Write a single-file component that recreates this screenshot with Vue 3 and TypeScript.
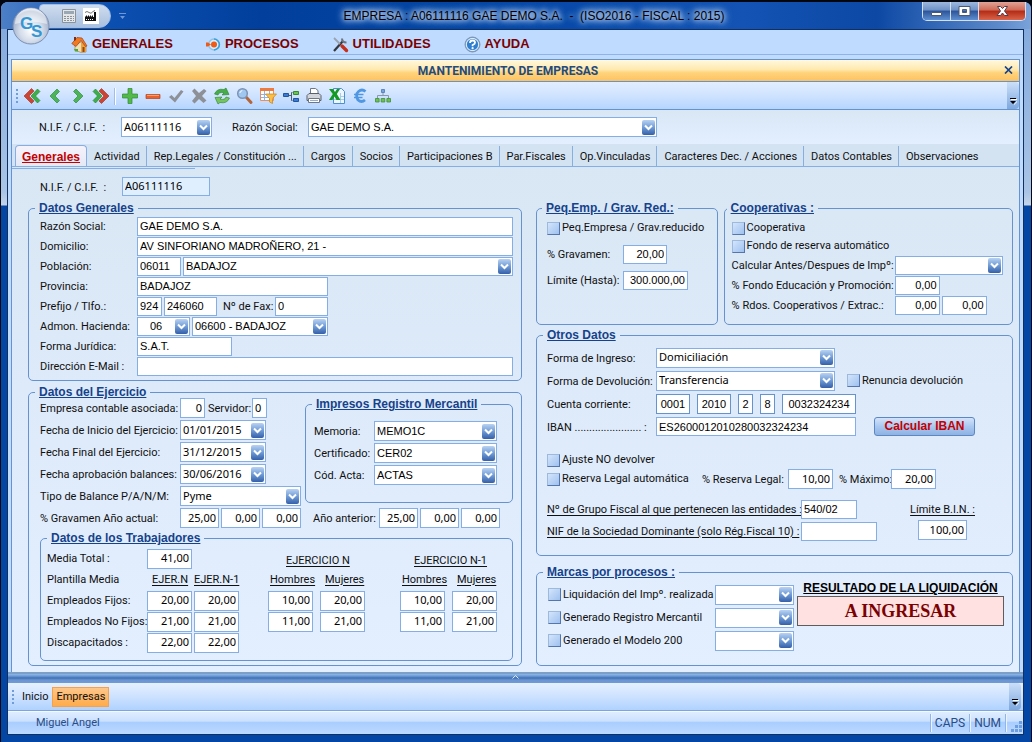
<script setup lang="ts">
import { ref } from 'vue'

interface Worker {
  id: string
  label: string
  values: string[]
}

const tabs: string[] = [
  'Generales', 'Actividad', 'Rep.Legales / Constitución ...', 'Cargos', 'Socios', 'Participaciones B',
  'Par.Fiscales', 'Op.Vinculadas', 'Caracteres Dec. / Acciones', 'Datos Contables', 'Observaciones',
]
const activeTab = ref('Generales')

const workers: Worker[] = [
  { id: 'fijos', label: 'Empleados Fijos:', values: ['20,00', '20,00', '10,00', '20,00', '10,00', '20,00'] },
  { id: 'nofijos', label: 'Empleados No Fijos:', values: ['21,00', '21,00', '11,00', '21,00', '11,00', '21,00'] },
  { id: 'disc', label: 'Discapacitados :', values: ['22,00', '22,00'] },
]

const account = [
  { size: 'w34', value: '0001', name: 'Entidad' },
  { size: 'w34', value: '2010', name: 'Oficina' },
  { size: 'w15', value: '2', name: 'Dígito 1' },
  { size: 'w15', value: '8', name: 'Dígito 2' },
  { size: 'w74', value: '0032324234', name: 'Número' },
]

const marks = ['Liquidación del Impº. realizada', 'Generado Registro Mercantil', 'Generado el Modelo 200']
</script>

<template>
  <div class="window">
    <header class="titlebar">
      <div class="quick">
        <button class="plain" aria-label="Calculadora">
          <svg width="16" height="16" viewBox="0 0 16 16"><path fill="#e4e6e8" stroke="#8a929c" d="M1.500 1.500h13v13h-13z" /><path fill="#9aa7b4" d="M3 3h10v3H3z" /><path stroke="#8b929b" stroke-width="1" stroke-dasharray="2 1" d="M3 8.500h10M3 10.500h10M3 12.500h10" /></svg>
        </button>
        <button class="plain" aria-label="Empresas">
          <svg width="16" height="16" viewBox="0 0 16 16"><path fill="#fff" d="M0 0h16v16H0z" /><path fill="#111" d="M2 13V9l2-2v2l2-2v2l2-2v2l2-2v2h1V4h2v9z" /><path fill="none" stroke="#777" d="M2 4.500q2-2 4 0t4-1l2-1" /><path stroke="#fff" d="M3 11.500h8" stroke-dasharray="1 1" /></svg>
        </button>
      </div>
      <svg class="more" width="7" height="8" viewBox="0 0 7 8"><path fill="#6f97d3" d="M0 1h7v1H0zM1 4h5L3.500 7z" /></svg>
      <h1 class="caption">EMPRESA : A06111116 GAE DEMO S.A.&nbsp; -&nbsp; (ISO2016 - FISCAL : 2015)</h1>
      <div class="winbtns">
        <button class="wb" aria-label="Minimizar"><svg width="13" height="13" viewBox="0 0 13 13"><path fill="#fff" stroke="#4a5a75" d="M1.500 7.500h10v3h-10z" /></svg></button>
        <button class="wb" aria-label="Maximizar"><svg width="13" height="13" viewBox="0 0 13 13"><path fill="#fff" fill-rule="evenodd" stroke="#4a5a75" d="M1 1.500h11v9H1zM4.500 4.500v3h4v-3z" /></svg></button>
        <button class="wb close" aria-label="Cerrar"><svg width="15" height="13" viewBox="0 0 15 13"><path fill="#fff" stroke="#5a3a45" d="M2.500 1.500h3l2 2 2-2h3L9.500 6l3.500 4.500H9.500L7.500 8l-2 2.500H2L5.500 6z" /></svg></button>
      </div>
      <svg class="orb" width="40" height="40" viewBox="0 0 40 40">
        <defs>
          <radialGradient id="orbFill" cx="50%" cy="62%" r="62%"><stop offset="0" stop-color="#ffffff" /><stop offset=".5" stop-color="#d3dcea" /><stop offset=".85" stop-color="#a4b3cc" /><stop offset="1" stop-color="#eef3fa" /></radialGradient>
        </defs>
        <circle cx="20" cy="20" r="18" fill="url(#orbFill)" stroke="#7d90b3" />
        <path fill="#fff" opacity=".5" d="M4 18a16 16 0 0 1 32 0q-16-5-32 0z" />
        <text x="9" y="23" font-family="Liberation Sans, sans-serif" font-weight="700" font-size="17" fill="#3497d3">G<tspan x="20" y="31">S</tspan></text>
      </svg>
    </header>

    <div class="client">
      <nav class="menu">
        <a href="#generales"><svg width="17" height="17" viewBox="0 0 17 17"><path fill="#ece0b8" stroke="#8c7a56" stroke-width=".6" d="M4 9l6-3 5 4v6l-5 .5L4 14z" /><path fill="#f2a03a" d="M10 6l5 4v6l-5 .5z" /><path fill="#f07a22" stroke="#a83d10" stroke-width=".7" d="M.8 7.500L6 1.500l5 .5 5 8-1.500.5-4.500-6-5 6z" /><path fill="#8a4a16" d="M11.500 11h2v5h-2z" /><path fill="#7b2c14" d="M3 1h2v3L3 5z" /><path fill="#58a22f" d="M3 13h4v2.500H4z" /></svg>GENERALES</a>
        <a href="#procesos"><svg width="15" height="15" viewBox="0 0 15 15"><circle cx="8" cy="7.500" r="5.400" fill="#d8ecfb" stroke="#8cc4ea" stroke-width="1.500" /><path fill="none" stroke="#3a9fd8" stroke-width="1.500" d="M8 2.100a5.400 5.400 0 0 1 0 10.800" /><circle cx="8" cy="7.500" r="3" fill="#ee5a17" /><path fill="#ee5a17" d="M0 5.500h2l3 2-3 2H0z" /></svg>PROCESOS</a>
        <a href="#utilidades"><svg width="17" height="17" viewBox="0 0 17 17"><path stroke="#33373d" stroke-width="2.200" d="M2 15L11 5" /><path fill="none" stroke="#6d747d" stroke-width="2" d="M10 2.500q0 4 4.500 4" /><path stroke="#9aa3ad" stroke-width="1.800" d="M2 2l6 6" /><path stroke="#c5301c" stroke-width="3.400" stroke-linecap="round" d="M10 10l4.500 4.500" /></svg>UTILIDADES</a>
        <a href="#ayuda"><svg width="17" height="17" viewBox="0 0 17 17"><circle cx="8.500" cy="8.500" r="7.500" fill="#2f7fd0" stroke="#8897ab" /><circle cx="8.500" cy="8.500" r="6.200" fill="none" stroke="#dce9f7" stroke-width="1.200" /><path fill="none" stroke="#fff" stroke-width="1.800" d="M6 7q0-2.500 2.500-2.500T11 6.700Q11 8 8.600 9v1.200" /><circle cx="8.600" cy="12.200" r="1.100" fill="#fff" /></svg>AYUDA</a>
      </nav>

      <main class="panel">
        <div class="gold">
          <h2>MANTENIMIENTO DE EMPRESAS</h2>
          <button class="plain goldx" aria-label="Cerrar ventana"><svg width="9" height="8" viewBox="0 0 9 8"><path stroke="#15428b" stroke-width="1.700" d="M1 .5l7 7M8 .5l-7 7" /></svg></button>
        </div>

        <div class="toolbar">
          <span class="grip"></span>
          <button class="tb" aria-label="Primero"><svg width="18" height="18" viewBox="0 0 18 18"><path fill="#cc4534" stroke="#9c3024" stroke-width=".6" d="M8.500 1.500L11 4 6 9l5 5-2.500 2.500L1 9z" /><path fill="#3fae49" stroke="#238032" stroke-width=".6" d="M14.500 2L17 4.500 12.500 9l4.500 4.500-2.500 2.500L8 9z" /></svg></button>
          <button class="tb" aria-label="Anterior"><svg width="18" height="18" viewBox="0 0 18 18"><path fill="#4cb356" stroke="#238032" stroke-width=".6" d="M11 2l2.500 2.500L9 9l4.500 4.500L11 16 4 9z" /></svg></button>
          <button class="tb" aria-label="Siguiente"><svg width="18" height="18" viewBox="0 0 18 18"><path fill="#4cb356" stroke="#238032" stroke-width=".6" d="M7 2L4.500 4.500 9 9l-4.500 4.500L7 16l7-7z" /></svg></button>
          <button class="tb" aria-label="Último"><svg width="18" height="18" viewBox="0 0 18 18"><path fill="#cc4534" stroke="#9c3024" stroke-width=".6" d="M9.500 1.500L7 4l5 5-5 5 2.500 2.500L17 9z" /><path fill="#3fae49" stroke="#238032" stroke-width=".6" d="M3.500 2L1 4.500 5.500 9 1 13.500 3.500 16 10 9z" /></svg></button>
          <span class="sep"></span>
          <button class="tb" aria-label="Añadir"><svg width="18" height="18" viewBox="0 0 18 18"><path fill="#55b84c" stroke="#2f8a30" stroke-width=".7" d="M7 1.500h4V7h5.500v4H11v5.500H7V11H1.500V7H7z" /></svg></button>
          <button class="tb" aria-label="Eliminar"><svg width="18" height="18" viewBox="0 0 18 18"><path fill="#e8602c" stroke="#b5401a" stroke-width=".7" d="M2 7.500h14v4H2z" /><path fill="#f6a070" d="M3 8h12v1H3z" /></svg></button>
          <button class="tb" aria-label="Guardar"><svg width="18" height="18" viewBox="0 0 18 18"><path fill="#8d9097" d="M2 10l2.500-2L7.500 11 14 3l2.500 1.500-8.500 11z" /></svg></button>
          <button class="tb" aria-label="Cancelar"><svg width="18" height="18" viewBox="0 0 18 18"><path fill="#8d9097" d="M4.500 1.500L9 6l5-4 2.500 2L12 9l4.500 4.500-3 2.500L9 12l-4.500 4.500L2 14l4-5L2 4z" /></svg></button>
          <button class="tb" aria-label="Refrescar"><svg width="18" height="18" viewBox="0 0 18 18"><path fill="#46ad47" stroke="#2a7f33" stroke-width=".6" d="M1.500 7Q4 1 11 2.500L13 1l3 6.500-7 .5 2-2Q6 4.500 5 8z" /><path fill="#76c45e" stroke="#2a7f33" stroke-width=".6" d="M16.500 11Q14 17 7 15.500L5 17l-3-6.500 7-.5-2 2q5 1.500 6-2z" /></svg></button>
          <button class="tb" aria-label="Buscar"><svg width="18" height="18" viewBox="0 0 18 18"><path stroke="#b5653a" stroke-width="3" stroke-linecap="round" d="M10.500 10.500L15 15.500" /><circle cx="6.500" cy="6.500" r="4.800" fill="#9fc7ef" stroke="#7b93b5" stroke-width="1.500" /><path fill="none" stroke="#fff" d="M3.800 6q.5-2 2.500-2.500" /></svg></button>
          <button class="tb" aria-label="Filtrar"><svg width="18" height="18" viewBox="0 0 18 18"><path fill="#fff" stroke="#e98d62" d="M1.500 1.500h13v12h-13z" /><path fill="#ee7a3e" d="M1 1h14v3H1z" /><path fill="none" stroke="#8fb2e2" d="M2 7.500h12M2 10.500h12M5.500 4v9M10.500 4v9" /><path fill="#f9bf4a" stroke="#c98a25" stroke-width=".8" d="M6.500 7h11L13.500 11.500v5l-3-1.500v-3.500z" /></svg></button>
          <button class="tb" aria-label="Relaciones"><svg width="18" height="18" viewBox="0 0 18 18"><path fill="none" stroke="#4b5e78" d="M6 8.500h4M10.500 5.500H9.500v8h1" /><path fill="#3c7bd0" stroke="#2155a0" d="M1.500 6.500h5v3h-5zM11.500 11.500h5v3h-5z" /><path fill="#69c34f" stroke="#368b2c" d="M11.500 4.500h5v3h-5z" /></svg></button>
          <button class="tb" aria-label="Imprimir"><svg width="18" height="18" viewBox="0 0 18 18"><path fill="#fff" stroke="#6f7782" d="M5.500 7.500V1.500h5l2.500 2v4" /><path fill="#d2d6dc" stroke="#59616c" d="M2 13.500V8.500l2-2h10l2 2v5z" /><path fill="#fff" stroke="#6f7782" d="M3.500 11.500h11v4h-11z" /><path stroke="#91adce" d="M5 13.500h8" /></svg></button>
          <button class="tb" aria-label="Exportar a Excel"><svg width="18" height="18" viewBox="0 0 18 18"><path fill="#eef6ff" stroke="#4b8fcd" d="M5.500 1.500h8l3 3v12h-11z" /><path stroke="#a8cdea" d="M12 9.500h4M6 12.500h10M12.500 6v10" /><path fill="#159a26" d="M1 2h4l2 3 2-3h3L8.800 7l3.700 6H8.500L6.500 9.500 4.500 13H1l3.800-6z" /></svg></button>
          <button class="tb" aria-label="Euro"><svg width="18" height="18" viewBox="0 0 18 18"><path fill="none" stroke="#4f97e3" stroke-width="2.800" d="M14.500 4.500Q11 1.500 7.500 4.500T7 13q3.500 3 7 0" /><path stroke="#4f97e3" stroke-width="1.700" d="M3 7.500h9.500M3 10.500h8.500" /></svg></button>
          <button class="tb" aria-label="Organigrama"><svg width="18" height="18" viewBox="0 0 18 18"><path fill="none" stroke="#8a98aa" d="M9 5v4M3.500 11.500V8.500h11v3" /><path fill="#7aa3dc" stroke="#4b76b5" stroke-width=".8" d="M7.500 2.500h3v3h-3z" /><path fill="#72bd58" stroke="#3b8f34" stroke-width=".8" d="M1.500 11.500h3.600v3.500H1.500zM7.200 11.500h3.600v3.500H7.200zM12.900 11.500h3.600v3.500h-3.600z" /></svg></button>
          <button class="overflow" aria-label="Más botones"><svg width="7" height="7" viewBox="0 0 7 7"><path fill="#000" d="M0 0h6v1H0zM0 3h6L3 6z" /><path fill="#fff" d="M1 1h6v1H1zM4 6l3-3v1L4 7z" /></svg></button>
        </div>

        <div class="search">
          <label class="lb l82" for="q-nif">N.I.F. / C.I.F.&nbsp; :</label>
          <select id="q-nif" class="w91 tah h20"><option>A06111116</option></select>
          <label class="lb l76 gap20" for="q-razon">Razón Social:</label>
          <select id="q-razon" class="w349 h20"><option>GAE DEMO S.A.</option></select>
        </div>

        <div class="tabs" role="tablist">
          <button v-for="t in tabs" :key="t" role="tab" :aria-selected="t === activeTab" :class="['tab', { on: t === activeTab }]" @click="activeTab = t">{{ t }}</button>
        </div>

        <form class="body" @submit.prevent>
          <div class="row nif">
            <label class="lb l82" for="nif">N.I.F. / C.I.F.&nbsp; :</label>
            <input id="nif" class="w88 tah ro" value="A06111116" readonly>
          </div>

          <div class="cols">
            <div class="col">
              <fieldset class="general">
                <legend>Datos Generales</legend>
                <div class="row"><label class="lb l97" for="razon">Razón Social:</label><input id="razon" class="grow" value="GAE DEMO S.A."></div>
                <div class="row"><label class="lb l97" for="dom">Domicilio:</label><input id="dom" class="grow" value="AV SINFORIANO MADROÑERO, 21 -"></div>
                <div class="row"><label class="lb l97" for="pob">Población:</label><input id="pob" class="w44" value="06011"><select class="grow" aria-label="Municipio"><option>BADAJOZ</option></select></div>
                <div class="row"><label class="lb l97" for="prov">Provincia:</label><input id="prov" class="w191" value="BADAJOZ"></div>
                <div class="row"><label class="lb l97" for="pref">Prefijo / Tlfo.:</label><input id="pref" class="w25" value="924"><input class="w53" value="246060" aria-label="Teléfono"><label class="lb l56 pad4" for="fax">Nº de Fax:</label><input id="fax" class="w53" value="0"></div>
                <div class="row"><label class="lb l97" for="admon">Admon. Hacienda:</label><select id="admon" class="w53 ind"><option>06</option></select><select class="w136" aria-label="Delegación"><option>06600 - BADAJOZ</option></select></div>
                <div class="row"><label class="lb l97" for="forma">Forma Jurídica:</label><input id="forma" class="w95" value="S.A.T."></div>
                <div class="row"><label class="lb l97" for="mail">Dirección E-Mail :</label><input id="mail" class="grow" value=""></div>
              </fieldset>

              <fieldset class="ejercicio">
                <legend>Datos del Ejercicio</legend>
                <div class="split">
                  <div class="dates">
                    <div class="row"><label class="lb l140" for="emp">Empresa contable asociada:</label><input id="emp" class="w25 num tah" value="0"><label class="lb l45 pad2" for="serv">Servidor:</label><input id="serv" class="w15 tah" value="0"></div>
                    <div class="row"><label class="lb l140" for="ini">Fecha de Inicio del Ejercicio:</label><select id="ini" class="w86 tah"><option>01/01/2015</option></select></div>
                    <div class="row"><label class="lb l140" for="fin">Fecha Final del Ejercicio:</label><select id="fin" class="w86 tah"><option>31/12/2015</option></select></div>
                    <div class="row"><label class="lb l140" for="apr">Fecha aprobación balances:</label><select id="apr" class="w86 tah"><option>30/06/2016</option></select></div>
                    <div class="row"><label class="lb l140" for="tipo">Tipo de Balance P/A/N/M:</label><select id="tipo" class="w121 tah"><option>Pyme</option></select></div>
                  </div>
                  <fieldset class="impresos">
                    <legend>Impresos Registro Mercantil</legend>
                    <div class="row"><label class="lb l60" for="mem">Memoria:</label><select id="mem" class="grow"><option>MEMO1C</option></select></div>
                    <div class="row"><label class="lb l60" for="cer">Certificado:</label><select id="cer" class="grow"><option>CER02</option></select></div>
                    <div class="row"><label class="lb l60" for="act">Cód. Acta:</label><select id="act" class="grow"><option>ACTAS</option></select></div>
                  </fieldset>
                </div>
                <div class="row grav">
                  <label class="lb l140" for="ga">% Gravamen Año actual:</label>
                  <input id="ga" class="w39 num tah" value="25,00"><input class="w39 num tah" value="0,00" aria-label="Actual 2"><input class="w39 num tah" value="0,00" aria-label="Actual 3">
                  <label class="lb l76 pad10" for="gb">Año anterior:</label>
                  <input id="gb" class="w39 num tah" value="25,00"><input class="w39 num tah" value="0,00" aria-label="Anterior 2"><input class="w39 num tah" value="0,00" aria-label="Anterior 3">
                </div>

                <fieldset class="trab">
                  <legend>Datos de los Trabajadores</legend>
                  <table>
                    <colgroup><col class="c100"><col class="c47"><col class="c74"><col class="c52"><col class="c80"><col class="c52"><col class="c47"></colgroup>
                    <tbody>
                      <tr>
                        <th><label for="media">Media Total :</label></th>
                        <td><input id="media" class="w45 num tah" value="41,00"></td><td></td>
                        <th colspan="2" class="u big">EJERCICIO N</th>
                        <th colspan="2" class="u big small">EJERCICIO N-1</th>
                      </tr>
                      <tr>
                        <th>Plantilla Media</th><th class="u hd">EJER.N</th><th class="u">EJER.N-1</th>
                        <th class="u in">Hombres</th><th class="u hd">Mujeres</th><th class="u in">Hombres</th><th class="u hd">Mujeres</th>
                      </tr>
                      <tr v-for="w in workers" :key="w.id">
                        <th>{{ w.label }}</th>
                        <td v-for="(v, i) in w.values" :key="i"><input class="w45 num tah" :value="v" :aria-label="w.label + ' ' + (i + 1)"></td>
                      </tr>
                    </tbody>
                  </table>
                </fieldset>
              </fieldset>
            </div>

            <div class="col">
              <div class="pair">
                <fieldset class="peq">
                  <legend>Peq.Emp. / Grav. Red.:</legend>
                  <label class="chk"><input type="checkbox">Peq.Empresa / Grav.reducido</label>
                  <div class="row"><label class="lb l76" for="pg">% Gravamen:</label><input id="pg" class="w44 num" value="20,00"></div>
                  <div class="row"><label class="lb l76" for="lh">Límite (Hasta):</label><input id="lh" class="w65 num" value="300.000,00"></div>
                </fieldset>
                <fieldset class="coop">
                  <legend>Cooperativas :</legend>
                  <label class="chk"><input type="checkbox">Cooperativa</label>
                  <label class="chk"><input type="checkbox">Fondo de reserva automático</label>
                  <div class="row"><label class="lb l163" for="ca">Calcular Antes/Despues de Impº:</label><select id="ca" class="w108"><option></option></select></div>
                  <div class="row"><label class="lb l163" for="fe">% Fondo Educación y Promoción:</label><input id="fe" class="w45 num" value="0,00"></div>
                  <div class="row"><label class="lb l163" for="rc">% Rdos. Cooperativos / Extrac.:</label><input id="rc" class="w45 num" value="0,00"><input class="w45 num" value="0,00" aria-label="Extracooperativos"></div>
                </fieldset>
              </div>

              <fieldset class="otros">
                <legend>Otros Datos</legend>
                <div class="row r23"><label class="lb l109" for="fi">Forma de Ingreso:</label><select id="fi" class="w179 tah"><option>Domiciliación</option></select></div>
                <div class="row r23"><label class="lb l109" for="fd">Forma de Devolución:</label><select id="fd" class="w179 tah"><option>Transferencia</option></select><label class="chk gap10"><input type="checkbox">Renuncia devolución</label></div>
                <div class="row r23 acct"><label class="lb l109" for="cc0">Cuenta corriente:</label><input v-for="(a, i) in account" :id="'cc' + i" :key="i" :class="[a.size, 'mid', 'strong']" :value="a.value" :aria-label="a.name"></div>
                <div class="row r23"><label class="lb l109" for="iban">IBAN ....................... :</label><input id="iban" class="w200" value="ES2600012010280032324234"><button class="calc">Calcular IBAN</button></div>
                <div class="row ajuste"><label class="chk"><input type="checkbox">Ajuste NO devolver</label></div>
                <div class="row reserva"><label class="chk l153"><input type="checkbox">Reserva Legal automática</label><label class="lb l86" for="rl">% Reserva Legal:</label><input id="rl" class="w45 num tah" value="10,00"><label class="lb l56 pad4" for="mx">% Máximo:</label><input id="mx" class="w45 num tah" value="20,00"></div>
                <div class="bottom">
                  <div>
                    <div class="row"><label class="lb l254 u" for="gf">Nº de Grupo Fiscal al que pertenecen las entidades :</label><input id="gf" class="w56" value="540/02"></div>
                    <div class="row"><label class="lb l254 u" for="sd">NIF de la Sociedad Dominante (solo Rég.Fiscal 10) :</label><input id="sd" class="w76" value=""></div>
                  </div>
                  <div class="bin"><label class="lb u" for="bin">Límite B.I.N. :</label><input id="bin" class="w49 num tah" value="100,00"></div>
                </div>
              </fieldset>

              <fieldset class="marcas">
                <legend>Marcas por procesos :</legend>
                <div class="marks">
                  <div v-for="m in marks" :key="m" class="row r23"><label class="chk l167"><input type="checkbox">{{ m }}</label><select class="w79" :aria-label="m"><option></option></select></div>
                </div>
                <div class="result">
                  <h3>RESULTADO DE LA LIQUIDACIÓN</h3>
                  <output>A INGRESAR</output>
                </div>
              </fieldset>
            </div>
          </div>
        </form>
      </main>

      <div class="splitter"><svg width="7" height="4" viewBox="0 0 7 4"><path fill="none" stroke="#dbe9fb" d="M.5 3.500l3-3 3 3" /></svg></div>
      <nav class="tasks">
        <span class="grip"></span>
        <button class="task">Inicio</button>
        <button class="task cur">Empresas</button>
        <button class="overflow" aria-label="Más"><svg width="7" height="7" viewBox="0 0 7 7"><path fill="#000" d="M0 0h6v1H0zM0 3h6L3 6z" /><path fill="#fff" d="M1 1h6v1H1zM4 6l3-3v1L4 7z" /></svg></button>
      </nav>
      <footer class="status">
        <span class="user">Miguel Angel</span>
        <span class="cell">CAPS</span>
        <span class="cell">NUM</span>
        <span class="cell size"><svg width="12" height="12" viewBox="0 0 12 12"><path fill="#6d9fe0" d="M8 0h3v3H8zM4 4h3v3H4zM8 4h3v3H8zM0 8h3v3H0zM4 8h3v3H4zM8 8h3v3H8z" /></svg></span>
      </footer>
    </div>
  </div>
</template>

<style>
body {
  background: #02060f;
}
</style>

<style scoped>
* {
  box-sizing: border-box;
}
.window {
  --line: #6593cf;
  --edge: #86aee6;
  --ui: "Roboto", "Liberation Sans", sans-serif;
  --val: "Liberation Sans", Arial, sans-serif;
  --tah: "Noto Sans", "Open Sans", sans-serif;
  position: relative;
  display: flex;
  flex-direction: column;
  min-height: 100vh;
  padding: 0 7px 7px 6px;
  border: 1px solid #02060f;
  border-top-width: 2px;
  border-radius: 8px 8px 0 0;
  background: linear-gradient(#7ea6dc 0, #a9c4e6 190px, #c4d5ea 203px, #0446a3 204px, #0446a3 100%);
  font: 11px/14px var(--ui);
  color: #101010;
}
button, input, select {
  margin: 0;
  padding: 0;
  border: 0;
  border-radius: 0;
  background: none;
  font: inherit;
  color: inherit;
}
.plain {
  display: flex;
}

.titlebar {
  display: flex;
  align-items: center;
  height: 27px;
  margin: 0 -7px 0 -6px;
  border-radius: 7px 7px 0 0;
  background: linear-gradient(90deg, #4c7fc6 0, #0b4fb0 110px, #023f9c 260px, #0546a6 50%, #1453b4 72%, #0c48a4 85%, #5d8aca 97%, #7ba3da 100%);
}
.quick {
  display: flex;
  align-items: center;
  gap: 6px;
  width: 72px;
  height: 24px;
  margin-left: 38px;
  padding-left: 21px;
  border: 1px solid #9fbde6;
  border-radius: 4px 12px 12px 4px;
  background: linear-gradient(#cfdcee, #a9c0df);
}
.more {
  margin-left: 8px;
}
.caption {
  flex: 1;
  margin: 0;
  padding-left: 20px;
  font: 12px/20px var(--val);
  text-align: center;
  text-shadow: 0 0 6px #cfe0f7, 0 0 8px #b9d0f2, 0 0 10px #a9c5ee, 0 0 4px #a9c5ee;
  color: #000;
  white-space: nowrap;
}
.winbtns {
  display: flex;
  align-self: flex-start;
  height: 19px;
  margin-right: 5px;
  border: 1px solid #d3e0f2;
  border-top: 0;
  border-radius: 0 0 5px 5px;
  overflow: hidden;
}
.wb {
  display: flex;
  align-items: center;
  justify-content: center;
  width: 28px;
  border-right: 1px solid #d3e0f2;
  background: linear-gradient(#9db8df 0, #6e91c4 45%, #2c549a 50%, #5f8fd0 100%);
}
.wb.close {
  width: 46px;
  border-right: 0;
  background: linear-gradient(#e2a397 0, #cf6a56 45%, #b42b14 50%, #d8654a 100%);
}
.orb {
  position: absolute;
  left: 10px;
  top: 4px;
}

.client {
  display: flex;
  flex: 1;
  flex-direction: column;
  border: 1px solid #11305f;
  background: #bfdbff;
}
.menu {
  display: flex;
  align-items: center;
  gap: 33px;
  height: 25px;
  padding: 4px 0 0 63px;
  border-bottom: 1px solid #8fb3e6;
}
.menu a {
  display: flex;
  align-items: center;
  gap: 4px;
  font: 700 13px/16px var(--val);
  color: #7b0000;
  text-decoration: none;
}

.panel {
  display: flex;
  flex: 1;
  flex-direction: column;
  margin: 4px 3px 0;
  border: 1px solid var(--line);
  border-bottom: 0;
  background: linear-gradient(#d9e6f4 0, #d9e6f4 100px, #e3efff 100%);
}
.gold {
  display: flex;
  align-items: center;
  height: 22px;
  padding: 0 6px 2px 0;
  border-bottom: 1px solid var(--line);
  background: linear-gradient(#fff9e0 0, #ffe9ae 45%, #ffd47c 60%, #fcc261 100%);
}
.gold h2 {
  flex: 1;
  margin: 0;
  padding-top: 2px;
  font: 700 12px/14px var(--ui);
  text-align: center;
  color: #254a7c;
}
.toolbar {
  display: flex;
  align-items: stretch;
  height: 28px;
  border-bottom: 1px solid var(--line);
  background: linear-gradient(#e2eeff 0, #cfe3ff 50%, #b6d5ff 100%);
}
.grip {
  width: 2px;
  margin: 7px 2px 6px 4px;
  background: repeating-linear-gradient(#6f9ddb 0, #6f9ddb 2px, transparent 2px, transparent 4px);
}
.tb {
  display: flex;
  align-items: center;
  justify-content: center;
  width: 23px;
}
.sep {
  width: 2px;
  margin: 6px 2px 4px;
  background: linear-gradient(90deg, #9cbfee 50%, #fff 50%);
}
.overflow {
  display: flex;
  align-items: flex-end;
  justify-content: center;
  width: 12px;
  margin-left: auto;
  padding-bottom: 4px;
  border-radius: 0 4px 4px 0;
  background: linear-gradient(#cbdff9, #7ea8de);
}
.search {
  display: flex;
  align-items: center;
  height: 34px;
  padding-left: 27px;
  background: linear-gradient(#d9e7f5, #e3efff);
}
.tabs {
  position: relative;
  display: flex;
  align-items: flex-end;
  height: 23px;
  padding-left: 3px;
  border-bottom: 1px solid var(--edge);
  background: #d4e3f2;
}
.tabs::after {
  content: "";
  position: absolute;
  left: 0;
  bottom: -3px;
  width: 183px;
  height: 1px;
  background: var(--edge);
}
.tab {
  height: 20px;
  padding: 1px 6px 0 7px;
  border-right: 1px solid #86aee0;
  white-space: nowrap;
}
.tab:last-child {
  border-right: 0;
}
.tab.on {
  height: 21px;
  padding: 1px 6px 0;
  border: 1px solid var(--edge);
  border-bottom: 0;
  border-radius: 4px 4px 0 0;
  background: linear-gradient(#f6f2fb, #e3e9f6);
  font: 700 12px/16px var(--val);
  color: #c40000;
  text-decoration: underline;
}

.body {
  flex: 1;
  padding: 10px 6px 6px 16px;
}
.row {
  display: flex;
  align-items: center;
  gap: 2px;
}
.nif {
  gap: 0;
  padding-left: 12px;
}
.cols {
  display: grid;
  grid-template-columns: 494fr 477fr;
  gap: 14px;
  margin-top: 5px;
}
.col {
  display: flex;
  flex-direction: column;
}

fieldset {
  min-width: 0;
  margin: 0;
  padding: 0 8px 4px 11px;
  border: 1px solid var(--line);
  border-radius: 5px;
}
legend {
  margin-left: -5px;
  padding: 0 4px;
  font: 700 12px/14px var(--val);
  color: #15428b;
  text-decoration: underline;
}
.lb {
  flex: none;
  padding-top: 2px;
  white-space: nowrap;
}
.u {
  text-decoration: underline;
  text-underline-offset: 2px;
}
input, select {
  flex: none;
  height: 19px;
  padding: 0 2px;
  border: 1px solid var(--edge);
  background: #fff;
  font: 11px/15px var(--val);
  color: #000;
}
select {
  padding: 0 16px 0 2px;
  appearance: none;
  background: #fff url("data:image/svg+xml,%3Csvg xmlns='http://www.w3.org/2000/svg' width='13' height='15'%3E%3Cdefs%3E%3ClinearGradient id='g' x2='0' y2='1'%3E%3Cstop stop-color='%23b9d2f2'/%3E%3Cstop offset='.5' stop-color='%236f9bd6'/%3E%3Cstop offset='1' stop-color='%233560a8'/%3E%3C/linearGradient%3E%3C/defs%3E%3Crect width='13' height='15' rx='2' fill='url(%23g)'/%3E%3Cpath d='M3 5.500l3.500 3.500L10 5.500' fill='none' stroke='white' stroke-width='2'/%3E%3C/svg%3E") no-repeat right 1px center;
}
.tah {
  padding-bottom: 2px;
  font-family: var(--tah);
}
.num {
  text-align: right;
}
.mid {
  padding: 0;
  text-align: center;
}
.ind {
  padding-left: 12px;
}
.strong {
  border-color: var(--line);
}
.ro {
  background: #e0effe;
}
.grow {
  flex: 1;
  min-width: 0;
}
.h20 { height: 20px; }
.w15 { width: 15px; }
.w25 { width: 25px; }
.w34 { width: 34px; }
.w39 { width: 39px; }
.w44 { width: 44px; }
.w45 { width: 45px; }
.w49 { width: 49px; }
.w53 { width: 53px; }
.w56 { width: 56px; }
.w65 { width: 65px; }
.w74 { width: 74px; }
.w76 { width: 76px; }
.w79 { width: 79px; }
.w86 { width: 86px; }
.w88 { width: 88px; }
.w91 { width: 91px; }
.w95 { width: 95px; }
.w108 { width: 108px; }
.w121 { width: 121px; }
.w136 { width: 136px; }
.w179 { width: 179px; }
.w191 { width: 191px; }
.w200 { width: 200px; }
.w349 { width: 349px; }
.l45 { width: 45px; }
.l56 { width: 56px; }
.l60 { width: 60px; }
.l76 { width: 76px; }
.l82 { width: 82px; }
.l86 { width: 86px; }
.l97 { width: 97px; }
.l109 { width: 109px; }
.l140 { width: 140px; }
.l153 { width: 153px; }
.l163 { width: 163px; }
.l167 { width: 167px; }
.l254 { width: 254px; }
.lb + input, .lb + select, .chk + select {
  margin-left: -2px;
}
.nif input, .search select {
  margin-left: 0;
}
.pad2 { padding-left: 1px; }
.pad4 { padding-left: 4px; }
.pad10 { padding-left: 10px; }
.gap10 { margin-left: 10px; }
.gap20 { margin-left: 20px; }

.general .row {
  height: 20px;
}
.general {
  padding-top: 1px;
  padding-bottom: 4px;
}
.ejercicio {
  flex: 1;
  margin-top: 4px;
}
.ejercicio input, .ejercicio select {
  height: 20px;
}
.split {
  display: grid;
  grid-template-columns: 265px 1fr;
  margin-top: -2px;
}
.dates .row, .grav {
  height: 22px;
}
.impresos {
  margin-bottom: 4px;
  padding: 9px 15px 0 8px;
}
.impresos legend {
  margin-left: -2px;
}
.impresos .row {
  height: 22px;
}
.trab {
  margin-top: 2px;
  padding: 3px 8px 7px 6px;
}
.trab legend {
  margin-left: 0;
}
table {
  border-collapse: collapse;
  table-layout: fixed;
  width: 452px;
}
.c100 { width: 100px; }
.c47 { width: 47px; }
.c52 { width: 52px; }
.c74 { width: 74px; }
.c80 { width: 80px; }
th, td {
  height: 21px;
  padding: 0;
  font-weight: 400;
  line-height: 14px;
  text-align: left;
  white-space: nowrap;
}
td input {
  display: block;
}
.big {
  padding: 4px 0 0 18px;
}
.small {
  padding-left: 14px;
}
.hd {
  padding-left: 5px;
}
.in {
  padding-left: 2px;
}

.pair {
  display: grid;
  grid-template-columns: 182fr 290fr;
  gap: 6px;
  height: 124px;
}
.chk {
  display: flex;
  flex: none;
  align-items: center;
  gap: 2px;
  height: 18px;
  white-space: nowrap;
}
.chk input {
  width: 13px;
  height: 13px;
  padding: 0;
  appearance: none;
  border: 1px solid;
  border-color: #9db9dd #5476ad #5476ad #9db9dd;
  background: linear-gradient(135deg, #d3e5fb, #9fc1ef);
}
.peq {
  padding: 4px 8px 0 10px;
}
.peq .row {
  height: 26px;
}
.peq .row:first-of-type {
  margin-top: 4px;
}
.coop {
  padding: 4px 7px 0;
}
.coop .row {
  height: 20px;
}
.otros {
  margin-top: 3px;
  padding: 4px 8px 13px 10px;
}
.otros legend {
  margin-left: -4px;
}
.r23 {
  height: 23px;
}
.r23 select, .acct input {
  height: 20px;
}
.acct {
  gap: 7px;
}
.acct .lb + input {
  margin-left: -7px;
}
.calc {
  width: 101px;
  height: 19px;
  margin-left: 16px;
  border: 1px solid #5b87c5;
  border-radius: 3px;
  background: linear-gradient(#d3e4fa 0, #a9c8f1 50%, #8fb2e3 100%);
  font: 700 12px/15px var(--val);
  color: #c40000;
}
.ajuste {
  margin-top: 13px;
  height: 18px;
}
.reserva {
  height: 20px;
}
.reserva .tah {
  height: 20px;
}
.bottom {
  display: flex;
  justify-content: space-between;
  margin-top: 9px;
  padding-right: 29px;
}
.bottom .row {
  height: 22px;
}
.bin {
  display: flex;
  flex-direction: column;
  align-items: center;
}
.bin .lb {
  height: 22px;
  line-height: 20px;
}
.bin input {
  margin: 0;
  height: 20px;
}
.marcas {
  flex: 1;
  margin-top: 9px;
  padding: 2px 8px 10px 11px;
}
.marks {
  float: left;
  padding-top: 2px;
}
.result {
  margin-left: 249px;
}
.result h3 {
  margin: 0;
  font: 700 12px/15px var(--val);
  color: #000;
  text-align: center;
  text-decoration: underline;
  white-space: nowrap;
}
.result output {
  display: block;
  height: 30px;
  border: 1px solid #5d5d5d;
  background: #ffe1e1;
  font: 700 18px/28px "Liberation Serif", serif;
  text-align: center;
  color: #7b0000;
}

.splitter {
  display: flex;
  justify-content: center;
  height: 11px;
  padding-top: 3px;
  background: linear-gradient(#7c9fc8 0, #7c9fc8 2px, #8fb8e6 2px, #6f9cd6 4px, #3f70b4 6px, #6b95d0 8px, #6f9ad4 100%);
}
.tasks {
  display: flex;
  align-items: stretch;
  height: 28px;
  border-bottom: 1px solid #7ba5de;
  background: linear-gradient(#e6f1ff 0, #cde2ff 50%, #b0d2ff 100%);
}
.tasks .overflow {
  margin-right: 2px;
}
.task {
  align-self: center;
  height: 20px;
  margin-left: 1px;
  padding: 0 3px 0 5px;
}
.task.cur {
  border: 1px solid #f5a04a;
  background: linear-gradient(#fdc789, #ffab4b);
  padding: 0 3px;
}
.status {
  display: flex;
  align-items: center;
  height: 23px;
  border-top: 1px solid #f4f9ff;
  background: linear-gradient(#dfedff 0, #cbe1ff 42%, #a9cdff 46%, #bddaff 100%);
  color: #2a4c85;
}
.user {
  flex: 1;
  padding-left: 28px;
}
.cell {
  height: 18px;
  padding: 0 4px;
  border-left: 1px solid #8fb5ea;
  box-shadow: inset 1px 0 #eaf3ff;
  font-size: 12px;
  line-height: 18px;
}
.size {
  padding: 6px 0 0 5px;
}
</style>
